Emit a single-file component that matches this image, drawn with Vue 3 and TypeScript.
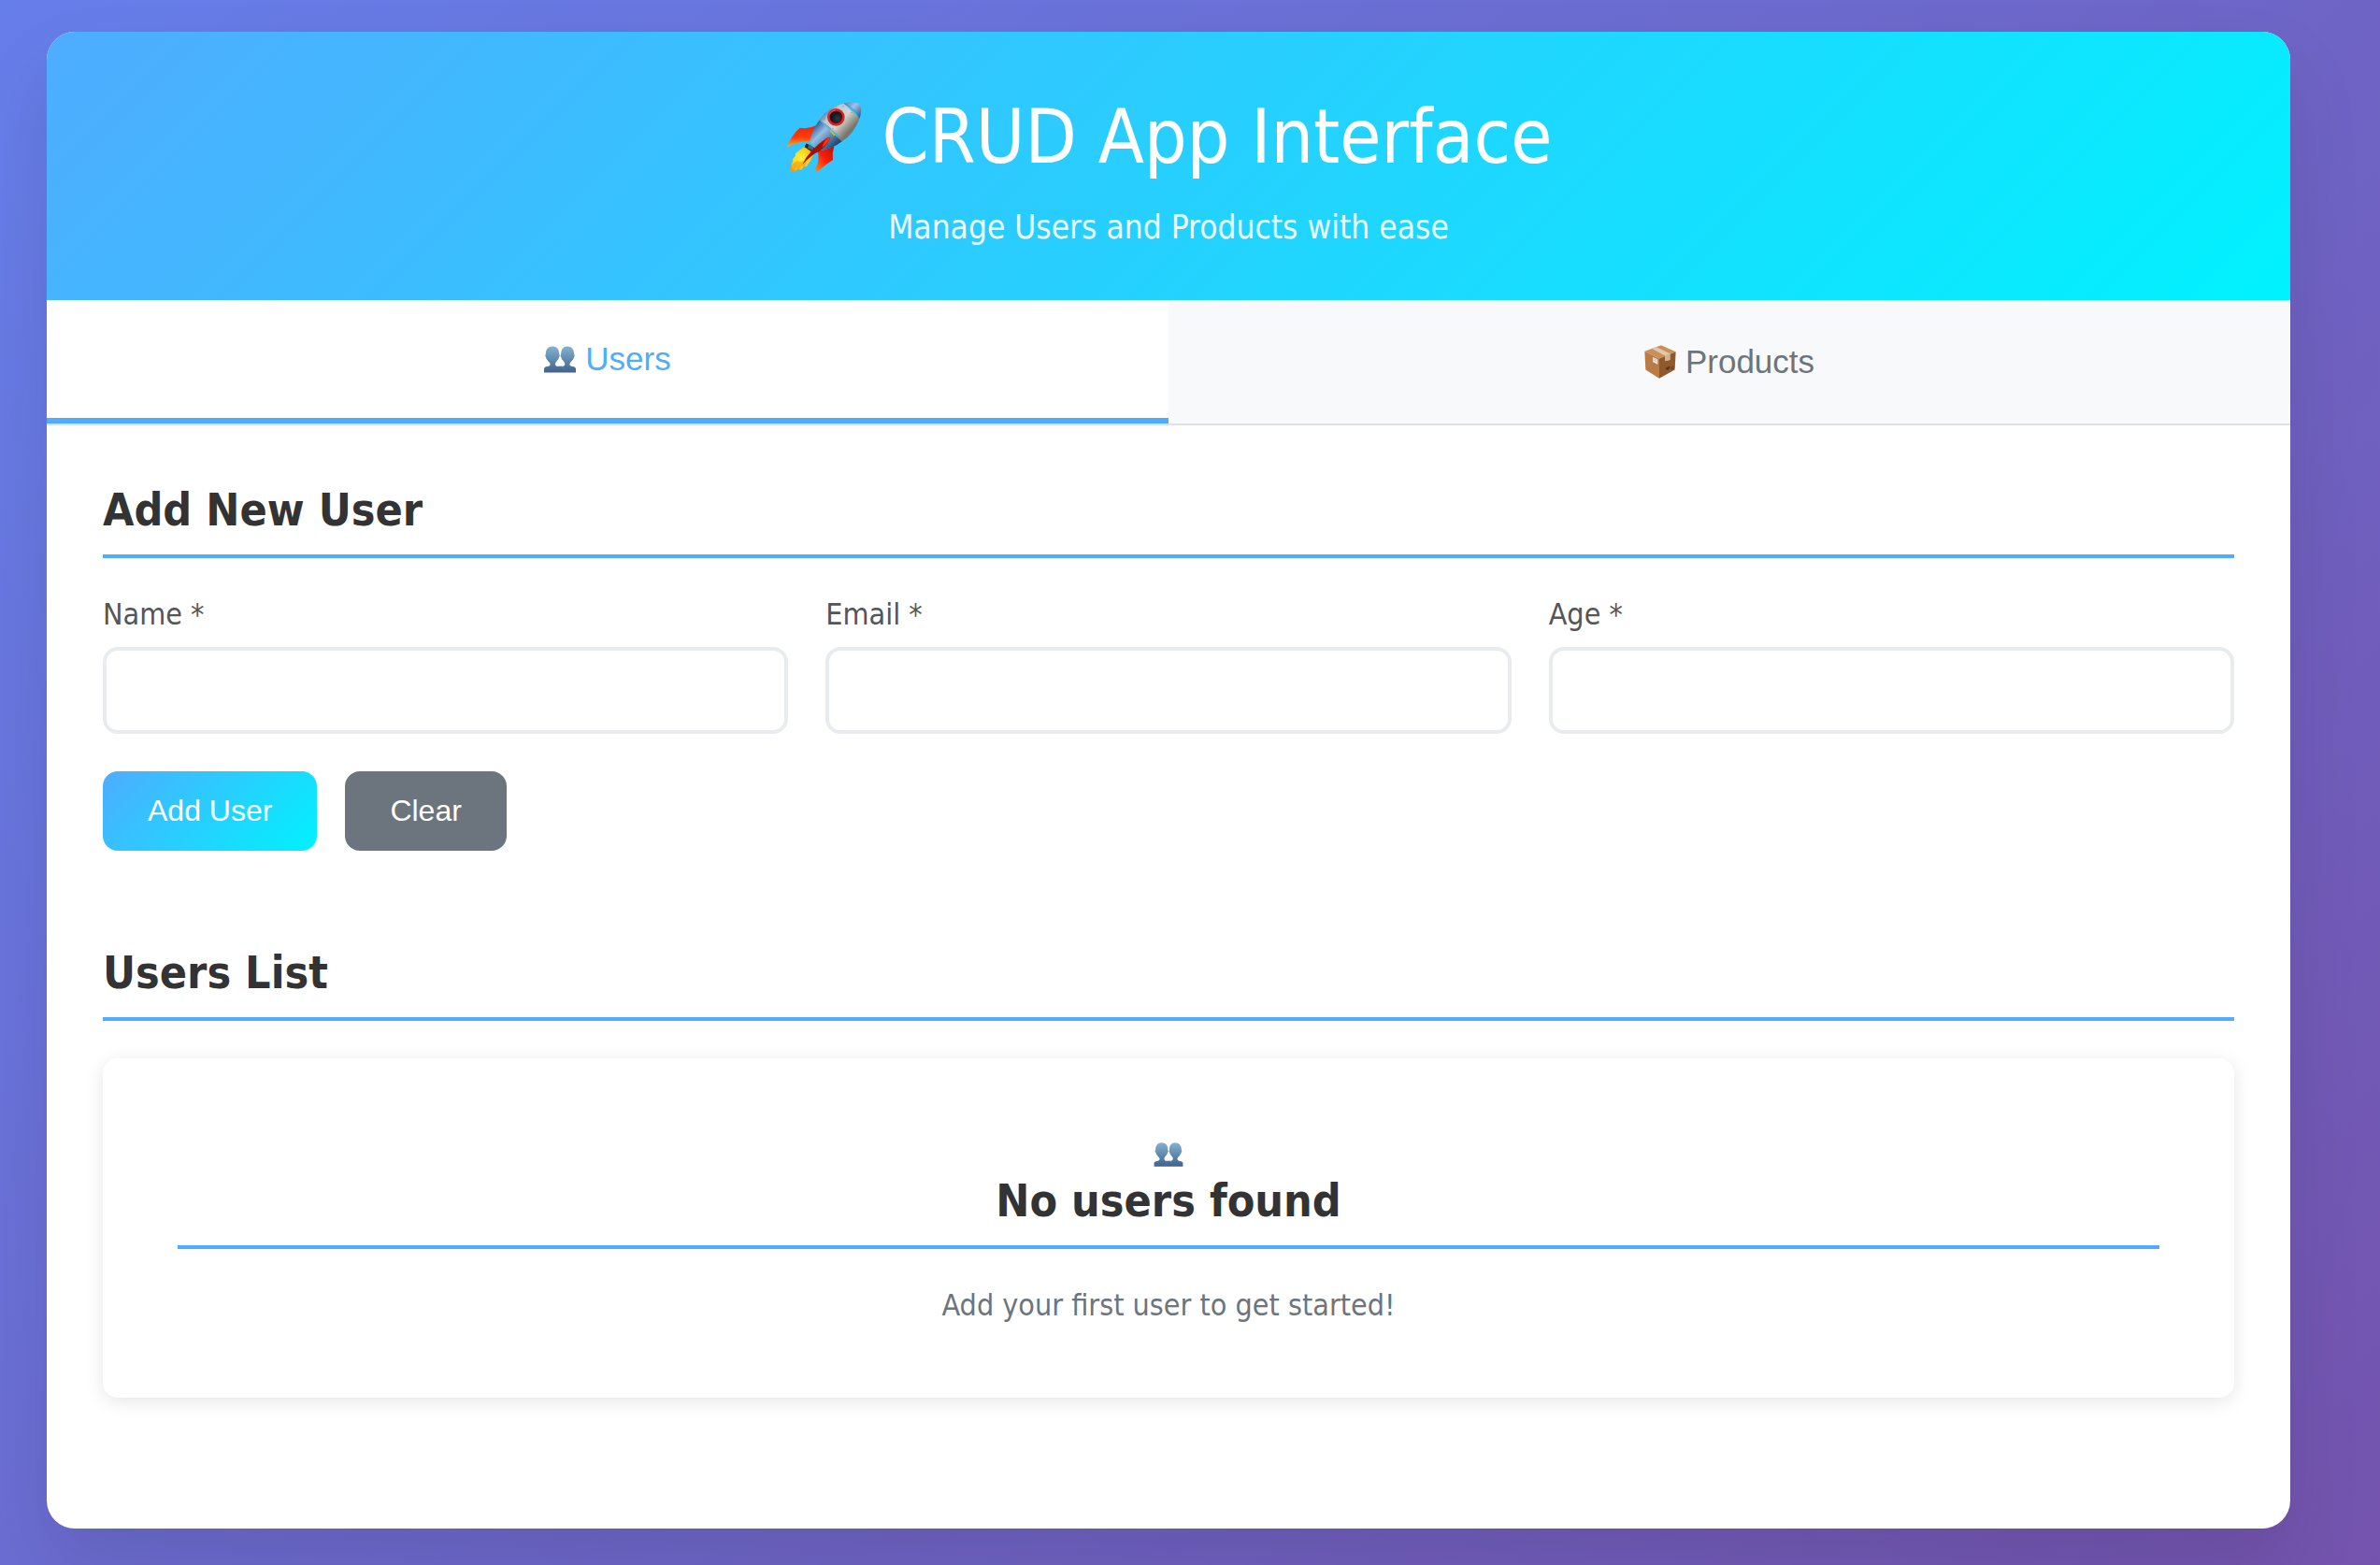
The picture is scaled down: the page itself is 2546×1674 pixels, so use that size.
<script setup lang="ts">
import { computed, reactive, ref } from 'vue'

type Tab = 'users' | 'products'

interface Field {
  key: string
  label: string
  type: string
}

const sections = {
  users: {
    title: 'Add New User',
    list: 'Users List',
    add: 'Add User',
    empty: 'No users found',
    hint: 'Add your first user to get started!',
    fields: [
      { key: 'name', label: 'Name', type: 'text' },
      { key: 'email', label: 'Email', type: 'email' },
      { key: 'age', label: 'Age', type: 'number' },
    ] as Field[],
  },
  products: {
    title: 'Add New Product',
    list: 'Products List',
    add: 'Add Product',
    empty: 'No products found',
    hint: 'Add your first product to get started!',
    fields: [
      { key: 'title', label: 'Name', type: 'text' },
      { key: 'category', label: 'Category', type: 'text' },
      { key: 'price', label: 'Price', type: 'number' },
    ] as Field[],
  },
}

const tab = ref<Tab>('users')
const section = computed(() => sections[tab.value])
const form = reactive<Record<string, string>>({})
const rows = reactive<Record<Tab, Record<string, string>[]>>({ users: [], products: [] })

function clear() {
  for (const field of section.value.fields) form[field.key] = ''
}

function submit() {
  rows[tab.value].push({ ...form })
  clear()
}
</script>

<template>
  <div class="page">
    <main class="container">
      <svg class="defs" aria-hidden="true">
        <defs>
          <linearGradient id="bust" x1="0" y1="0" x2="0" y2="1">
            <stop offset="0" stop-color="#84b2d0" />
            <stop offset="1" stop-color="#40628c" />
          </linearGradient>
          <symbol id="people" viewBox="0 0 102 86">
            <path
              fill="url(#bust)"
              d="M0 85V72q2-6 14-7 6-2 6-8-3-5-8-10Q7 42 5 34 2 31 5 27 5 1 27 1t22 26q3 4 0 7-2 8-7 13-6 5-6 10 0 6 5 8h20q6-2 6-8-1-5-6-10-5-5-7-13-3-3 0-7Q54 1 75 1t22 26q3 4 0 7-2 8-7 13-6 5-8 10 0 6 6 8 12 1 14 7v13z"
            />
            <path d="M50 65q10 2 15 11-2-9-8-11z" fill="#5d8ba9" />
          </symbol>
        </defs>
      </svg>

      <header class="header">
        <h1>
          <svg class="rocket" viewBox="24 36 246 228" aria-hidden="true">
            <defs>
              <linearGradient id="hull" x1="130" y1="85" x2="205" y2="155" gradientUnits="userSpaceOnUse">
                <stop offset="0" stop-color="#416c9e" />
                <stop offset=".25" stop-color="#b9c9d8" />
                <stop offset=".6" stop-color="#d5d5d0" />
                <stop offset="1" stop-color="#77776f" />
              </linearGradient>
              <linearGradient id="tail" x1="115" y1="115" x2="180" y2="180" gradientUnits="userSpaceOnUse">
                <stop offset="0" stop-color="#315f98" />
                <stop offset=".35" stop-color="#94bfe5" />
                <stop offset="1" stop-color="#234674" />
              </linearGradient>
              <linearGradient id="nose" x1="215" y1="40" x2="265" y2="90" gradientUnits="userSpaceOnUse">
                <stop offset="0" stop-color="#5b87bd" />
                <stop offset=".4" stop-color="#9bc4ed" />
                <stop offset="1" stop-color="#1d4e8a" />
              </linearGradient>
              <linearGradient id="fin" x1="0" y1="0" x2="0" y2="1">
                <stop offset="0" stop-color="#e52710" />
                <stop offset=".55" stop-color="#ff3b08" />
                <stop offset="1" stop-color="#ffb31b" />
              </linearGradient>
              <linearGradient id="finLow" x1="1" y1="0" x2="0" y2="1">
                <stop offset="0" stop-color="#b31408" />
                <stop offset=".5" stop-color="#ff1c0a" />
                <stop offset="1" stop-color="#ff8b18" />
              </linearGradient>
              <radialGradient id="flame" cx=".45" cy=".45" r=".6">
                <stop offset="0" stop-color="#fff23c" />
                <stop offset=".55" stop-color="#ffd21c" />
                <stop offset="1" stop-color="#f79410" />
              </radialGradient>
              <radialGradient id="glass" cx=".6" cy=".6" r=".6">
                <stop offset="0" stop-color="#34383c" />
                <stop offset="1" stop-color="#050607" />
              </radialGradient>
            </defs>
            <path d="M29 181Q44 142 71 119q28 5 54-8-17 25-21 51-35-1-75 19z" fill="url(#fin)" />
            <path d="M128 192q25 0 53-14-7 22-4 44-22 14-50 38-8-3-6-10 15-24 7-58z" fill="url(#finLow)" />
            <path d="M84 180q25-4 34 12-5 24-20 43l-5 8-10 1-6 10-12-2-9 8-10-1-7 4 3-13 2-7-2-8 7-7-2-8 9-9 1-10z" fill="url(#flame)" />
            <path d="m45 238 7 4-3 9 11-5 5 10 11-15 9 5 8-13-5-9-14 4-13-2z" fill="#f59a12" opacity=".6" />
            <path d="m92 169 28 16-8 13-26-17z" fill="#20272d" />
            <path d="m101 172 15 10-5 10-16-9z" fill="#59636a" />
            <path d="M103 162q7-37 30-67l73 68q-30 24-73 29-4 1-8-3z" fill="url(#tail)" />
            <path d="M133 95q31-46 79-54l50 48q-15 47-56 74-31-42-73-68z" fill="url(#hull)" />
            <path d="M212 41q27-7 51 1 9 22-1 48-15-36-50-49z" fill="url(#nose)" />
            <path d="M133 95q44 24 73 68M212 41q35 13 50 49" fill="none" stroke="#6c7373" stroke-width="2" />
            <path d="m168 127 14 17" stroke="#e6bd20" stroke-width="4" />
            <path d="M79 238q20-47 80-87 12-3 8 7-18 24-32 36-23 6-56 44z" fill="#a90d08" />
            <path d="M160 152q10-4 6 7-12 14-23 23 3-19 17-30z" fill="#ff3016" />
            <circle cx="187" cy="85" r="24" fill="url(#glass)" stroke="#df1d24" stroke-width="8" />
            <path d="M166 77q5-13 20-15" fill="none" stroke="#ff6c61" stroke-width="2" />
            <g fill="#858b8b">
              <circle cx="150" cy="90" r="2" />
              <circle cx="177" cy="121" r="2" />
              <circle cx="204" cy="149" r="2" />
              <circle cx="210" cy="50" r="2" />
              <circle cx="237" cy="70" r="2" />
              <circle cx="253" cy="92" r="2" />
            </g>
          </svg>
          <span>CRUD App Interface</span>
        </h1>
        <p>Manage Users and Products with ease</p>
      </header>

      <nav class="tabs">
        <button type="button" class="tab" :class="{ active: tab === 'users' }" @click="tab = 'users'">
          <svg class="tab-icon people" aria-hidden="true"><use href="#people" /></svg>
          <span>Users</span>
        </button>
        <button type="button" class="tab" :class="{ active: tab === 'products' }" @click="tab = 'products'">
          <svg class="tab-icon" viewBox="0 0 100 106" aria-hidden="true">
            <path d="M1 20 53 1l46 20-52 22z" fill="#c99158" />
            <path d="M1 20 47 43v62L4 78z" fill="#ba7b45" />
            <path d="m47 43 52-22-3 57-49 27z" fill="#8f592d" />
            <path d="m23 11 13-5 45 21v20l-16 4V34z" fill="#dfc7a8" />
            <path d="m65 34 16-7v20l-16 4z" fill="#cdb392" />
            <path d="m27 38 15 7v16l-15-7z" fill="#e9e9e6" />
            <path d="m30 43 9 4m-9 1 9 4" stroke="#a9aaa6" stroke-width="2" />
            <path d="m68 73 12-5q0 9-6 10-6 0-6-5zM86 68v10m5-12v10" fill="#56351d" stroke="#56351d" stroke-width="2" />
          </svg>
          <span>Products</span>
        </button>
      </nav>

      <div class="content">
        <section class="section">
          <h2>{{ section.title }}</h2>
          <form novalidate @submit.prevent="submit">
            <div class="fields">
              <div v-for="field in section.fields" :key="field.key" class="field">
                <label :for="field.key">{{ field.label }} *</label>
                <input :id="field.key" v-model="form[field.key]" :type="field.type" required />
              </div>
            </div>
            <div class="actions">
              <button type="submit" class="btn primary">{{ section.add }}</button>
              <button type="button" class="btn secondary" @click="clear">Clear</button>
            </div>
          </form>
        </section>

        <section class="section">
          <h2>{{ section.list }}</h2>
          <div class="list">
            <table v-if="rows[tab].length">
              <tbody>
                <tr v-for="(row, i) in rows[tab]" :key="i">
                  <td v-for="field in section.fields" :key="field.key">{{ row[field.key] }}</td>
                </tr>
              </tbody>
            </table>
            <div v-else class="empty">
              <div class="empty-icon">
                <svg class="empty-people" aria-hidden="true"><use href="#people" /></svg>
              </div>
              <h2>{{ section.empty }}</h2>
              <p>{{ section.hint }}</p>
            </div>
          </div>
        </section>
      </div>
    </main>
  </div>
</template>

<style>
body {
  margin: 0;
}
</style>

<style scoped>
* {
  box-sizing: border-box;
  margin: 0;
}

.page {
  min-height: 100vh;
  padding: 34px 96px 39px 50px;
  background: linear-gradient(135deg, #667eea 0%, #764ba2 119%);
  font: 32px/41px Tahoma, "DejaVu Sans Condensed", "DejaVu Sans", sans-serif;
  color: #333;
}

.container {
  overflow: hidden;
  border-radius: 30px;
  background: #fff;
  box-shadow: 0 40px 80px rgba(0, 0, 0, 0.1);
}

.defs {
  position: absolute;
  width: 0;
  height: 0;
}

.header {
  padding: 60px 60px 56px;
  background: linear-gradient(135deg, #4facfe 0%, #00f2fe 100%);
  color: #fff;
  text-align: center;
}

.header h1 {
  display: flex;
  justify-content: center;
  align-items: center;
  gap: 22px;
  margin-bottom: 22px;
  font-size: 80px;
  font-weight: 300;
  line-height: 106px;
}

.rocket {
  width: 82px;
  height: 76px;
}

.header p {
  font-size: 35px;
  line-height: 43px;
  opacity: 0.9;
}

.tabs {
  display: flex;
  border-bottom: 2px solid #dee2e6;
  background: #f8f9fa;
}

.tab {
  flex: 1;
  display: flex;
  justify-content: center;
  align-items: center;
  gap: 10px;
  height: 132px;
  padding: 0;
  border: 0;
  background: transparent;
  color: #6c757d;
  font: 35px/40px Arial, "Liberation Sans", sans-serif;
  cursor: pointer;
}

.tab.active {
  border-bottom: 6px solid #4facfe;
  background: #fff;
  color: #4facfe;
}

.tab-icon {
  width: 34px;
  height: 36px;
}

.tab-icon.people {
  height: 29px;
}

.content {
  padding: 60px;
}

.section {
  margin-bottom: 80px;
}

.section + .section {
  margin-top: 100px;
}

h2 {
  margin-bottom: 40px;
  padding-bottom: 18px;
  border-bottom: 4px solid #4facfe;
  font-size: 48px;
  line-height: 60px;
}

.fields {
  display: grid;
  grid-template-columns: repeat(3, 1fr);
  gap: 40px;
  margin-bottom: 40px;
}

.field {
  display: flex;
  flex-direction: column;
  gap: 14px;
}

label {
  color: #555;
}

input {
  width: 100%;
  height: 93px;
  padding: 24px;
  border: 4px solid #e9ecef;
  border-radius: 16px;
  background: #fff;
  font: inherit;
  color: inherit;
}

.actions {
  display: flex;
  gap: 30px;
}

.btn {
  padding: 24px 48px;
  border: 0;
  border-radius: 16px;
  color: #fff;
  font: 32px/37px Arial, "Liberation Sans", sans-serif;
  cursor: pointer;
}

.primary {
  background: linear-gradient(135deg, #4facfe 0%, #00f2fe 100%);
}

.secondary {
  background: #6c757d;
}

.list {
  overflow: hidden;
  border-radius: 16px;
  background: #fff;
  box-shadow: 0 4px 20px rgba(0, 0, 0, 0.1);
}

table {
  width: 100%;
  border-collapse: collapse;
}

td {
  padding: 30px;
  border-bottom: 2px solid #dee2e6;
}

.empty {
  padding: 80px 80px 78px;
  text-align: center;
}

.empty-icon {
  display: flex;
  justify-content: center;
  align-items: center;
  height: 42px;
  padding-top: 4px;
}

.empty-people {
  width: 32px;
  height: 26px;
}

.empty p {
  color: #6c757d;
}
</style>
